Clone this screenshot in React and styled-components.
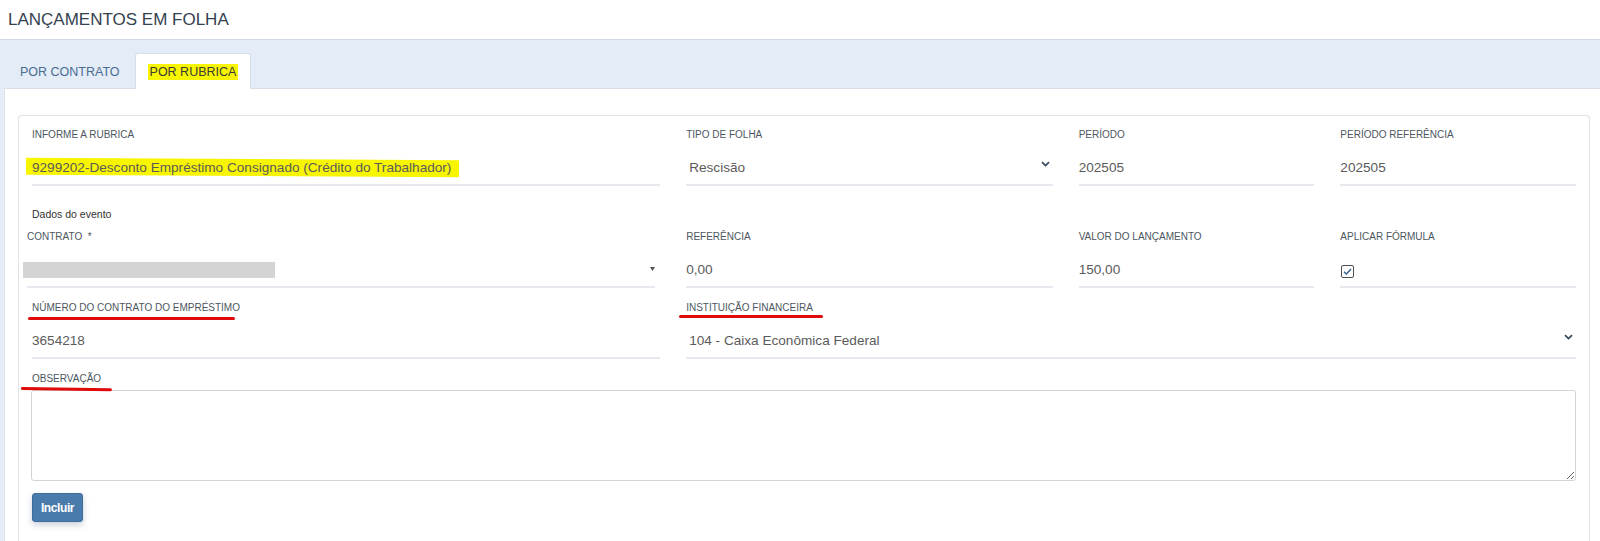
import React from 'react';
import styled, { createGlobalStyle, css } from 'styled-components';

const GlobalStyle = createGlobalStyle`
  html, body {
    margin: 0;
    padding: 0;
    background: #ffffff;
    font-family: "Liberation Sans", Arial, sans-serif;
  }
  * { box-sizing: border-box; }
`;

const Header = styled.header`
  height: 40px;
  background: #ffffff;
  border-bottom: 1px solid #cfd8e3;
  padding-left: 8px;
`;

const Title = styled.h1`
  margin: 0;
  font-size: 17px;
  font-weight: normal;
  line-height: 39px;
  color: #33424f;
`;

const Workspace = styled.section`
  background: #e3ecf7;
  padding: 13px 0 0 4px;
  min-height: 501px;
  display: flex;
  flex-direction: column;
`;

const TabList = styled.nav`
  display: flex;
  align-items: flex-end;
  padding-left: 1px;
  margin-bottom: -1px;
  position: relative;
  z-index: 1;
`;

const Tab = styled.div`
  height: 36px;
  padding: 0 14px;
  display: flex;
  align-items: center;
  font-size: 12.5px;
  color: #4a6b92;
  border: 1px solid transparent;
  border-bottom: none;
  border-radius: 3px 3px 0 0;
  ${(p) =>
    p.$active &&
    css`
      background: #ffffff;
      border-color: #d8dfe7;
      color: #3a3a3a;
    `}
`;

const Highlight = styled.span`
  position: relative;
  z-index: 0;
  &::before {
    content: '';
    position: absolute;
    z-index: -1;
    left: ${(p) => p.$left || -2}px;
    right: ${(p) => p.$right || -2}px;
    top: ${(p) => p.$top || -1}px;
    bottom: ${(p) => p.$bottom || -1}px;
    background: #f8f500;
    transform: rotate(${(p) => p.$tilt || 0}deg);
  }
`;

const Panel = styled.div`
  flex: 1;
  background: #ffffff;
  border-top: 1px solid #d8dfe7;
  border-left: 1px solid #dfe5ec;
  padding: 26px 10px 0 13px;
`;

const Card = styled.div`
  border: 1px solid #e2e2e2;
  border-bottom: none;
  border-radius: 4px 4px 0 0;
  padding: 13px 13px 30px;
`;

const Row = styled.div`
  display: grid;
  grid-template-columns: repeat(12, 1fr);
  column-gap: 26px;
  margin-top: ${(p) => p.$gap || 0}px;
`;

const Field = styled.div`
  grid-column: span ${(p) => p.$span};
  display: flex;
  flex-direction: column;
  min-width: 0;
  ${(p) =>
    p.$shift &&
    css`
      margin-left: -5px;
      margin-right: 5px;
    `}
`;

const Label = styled.label`
  display: block;
  font-size: 10px;
  line-height: 12px;
  color: #4d5660;
  text-transform: uppercase;
  margin-bottom: ${(p) => (p.$tight ? 5 : 10)}px;
`;

const Mark = styled.span`
  position: relative;
  &::after {
    content: '';
    position: absolute;
    left: ${(p) => p.$dx}px;
    width: ${(p) => p.$w}px;
    top: ${(p) => p.$dy}px;
    height: 2.5px;
    border-radius: 2px;
    background: #e00a0a;
    transform: rotate(${(p) => p.$tilt || 0}deg);
    transform-origin: left center;
  }
`;

const Value = styled.div`
  height: 35px;
  display: flex;
  align-items: center;
  gap: 8px;
  border-bottom: 2px solid #e6eaf0;
  font-size: 13.6px;
  color: #5b5b5b;
  padding-left: ${(p) => (p.$select ? 3 : 0)}px;
  padding-right: ${(p) => (p.$select ? 3 : 0)}px;
  white-space: nowrap;
`;

const Text = styled.span`
  flex: 1;
  min-width: 0;
`;

const Chevron = styled.svg`
  width: 9px;
  height: 6px;
  margin-bottom: 7px;
  flex: none;
`;

const Caret = styled.svg`
  width: 5px;
  height: 4px;
  flex: none;
  margin-bottom: 2px;
`;

const Redacted = styled.span`
  display: block;
  width: 252px;
  height: 16px;
  margin-left: -4px;
  background: #d4d4d4;
`;

const Caption = styled.div`
  margin-top: 22px;
  margin-bottom: 10px;
  font-size: 10.5px;
  line-height: 13px;
  color: #333333;
`;

const Check = styled.svg`
  width: 13px;
  height: 13px;
  margin-left: 1px;
  margin-top: 3px;
`;

const Observation = styled.textarea`
  display: block;
  width: calc(100% + 1px);
  margin-left: -1px;
  height: 91px;
  border: 1px solid #d4d4d4;
  border-radius: 3px;
  font-family: inherit;
  font-size: 13px;
  resize: vertical;
  outline: none;
`;

const Button = styled.button`
  margin-top: 12px;
  width: 51px;
  height: 29px;
  border: 1px solid #3f6c9a;
  border-radius: 3px;
  background: #4a7bad;
  color: #ffffff;
  font-family: inherit;
  font-size: 12px;
  font-weight: bold;
  letter-spacing: -0.4px;
  padding: 0;
  box-shadow: 0 3px 6px rgba(40, 70, 110, 0.25);
`;

const ChevronIcon = () => (
  <Chevron viewBox="0 0 9 6">
    <path d="M1 1.2 L4.5 4.6 L8 1.2" fill="none" stroke="#34495e" strokeWidth="1.7" />
  </Chevron>
);

export default function App() {
  return (
    <>
      <GlobalStyle />
      <Header>
        <Title>LANÇAMENTOS EM FOLHA</Title>
      </Header>
      <Workspace>
        <TabList>
          <Tab>POR CONTRATO</Tab>
          <Tab $active>
            <Highlight $left={-2} $right={-2} $top={-1} $bottom={-1}>POR RUBRICA</Highlight>
          </Tab>
        </TabList>
        <Panel>
          <Card>
            <Row>
              <Field $span={5}>
                <Label>Informe a rubrica</Label>
                <Value>
                  <Text>
                    <Highlight $left={-6} $right={-8} $top={-1} $bottom={-1} $tilt={0.3}>
                      9299202-Desconto Empréstimo Consignado (Crédito do Trabalhador)
                    </Highlight>
                  </Text>
                </Value>
              </Field>
              <Field $span={3}>
                <Label>Tipo de folha</Label>
                <Value $select>
                  <Text>Rescisão</Text>
                  <ChevronIcon />
                </Value>
              </Field>
              <Field $span={2}>
                <Label>Período</Label>
                <Value>
                  <Text>202505</Text>
                </Value>
              </Field>
              <Field $span={2}>
                <Label>Período referência</Label>
                <Value>
                  <Text>202505</Text>
                </Value>
              </Field>
            </Row>

            <Caption>Dados do evento</Caption>

            <Row>
              <Field $span={5} $shift>
                <Label>Contrato &nbsp;*</Label>
                <Value>
                  <Text>
                    <Redacted />
                  </Text>
                  <Caret viewBox="0 0 5 4">
                    <path d="M0 0 H5 L2.5 4 Z" fill="#555" />
                  </Caret>
                </Value>
              </Field>
              <Field $span={3}>
                <Label>Referência</Label>
                <Value>
                  <Text>0,00</Text>
                </Value>
              </Field>
              <Field $span={2}>
                <Label>Valor do lançamento</Label>
                <Value>
                  <Text>150,00</Text>
                </Value>
              </Field>
              <Field $span={2}>
                <Label>Aplicar fórmula</Label>
                <Value>
                  <Check viewBox="0 0 13 13">
                    <rect x="0.5" y="0.5" width="12" height="12" rx="1.5" fill="#fff" stroke="#4b5158" />
                    <path d="M3 6.8 L5.4 9 L10 4" fill="none" stroke="#2f5d8a" strokeWidth="1.4" />
                  </Check>
                </Value>
              </Field>
            </Row>

            <Row $gap={14}>
              <Field $span={5}>
                <Label>
                  <Mark $dx={-4} $w={207} $dy={15}>Número do contrato do empréstimo</Mark>
                </Label>
                <Value>
                  <Text>3654218</Text>
                </Value>
              </Field>
              <Field $span={7}>
                <Label>
                  <Mark $dx={-7} $w={144} $dy={13}>Instituição financeira</Mark>
                </Label>
                <Value $select>
                  <Text>104 - Caixa Econômica Federal</Text>
                  <ChevronIcon />
                </Value>
              </Field>
            </Row>

            <Row $gap={14}>
              <Field $span={12}>
                <Label $tight>
                  <Mark $dx={-11} $w={91} $dy={13.5} $tilt={0.8}>Observação</Mark>
                </Label>
                <Observation />
              </Field>
            </Row>

            <Button>Incluir</Button>
          </Card>
        </Panel>
      </Workspace>
    </>
  );
}
